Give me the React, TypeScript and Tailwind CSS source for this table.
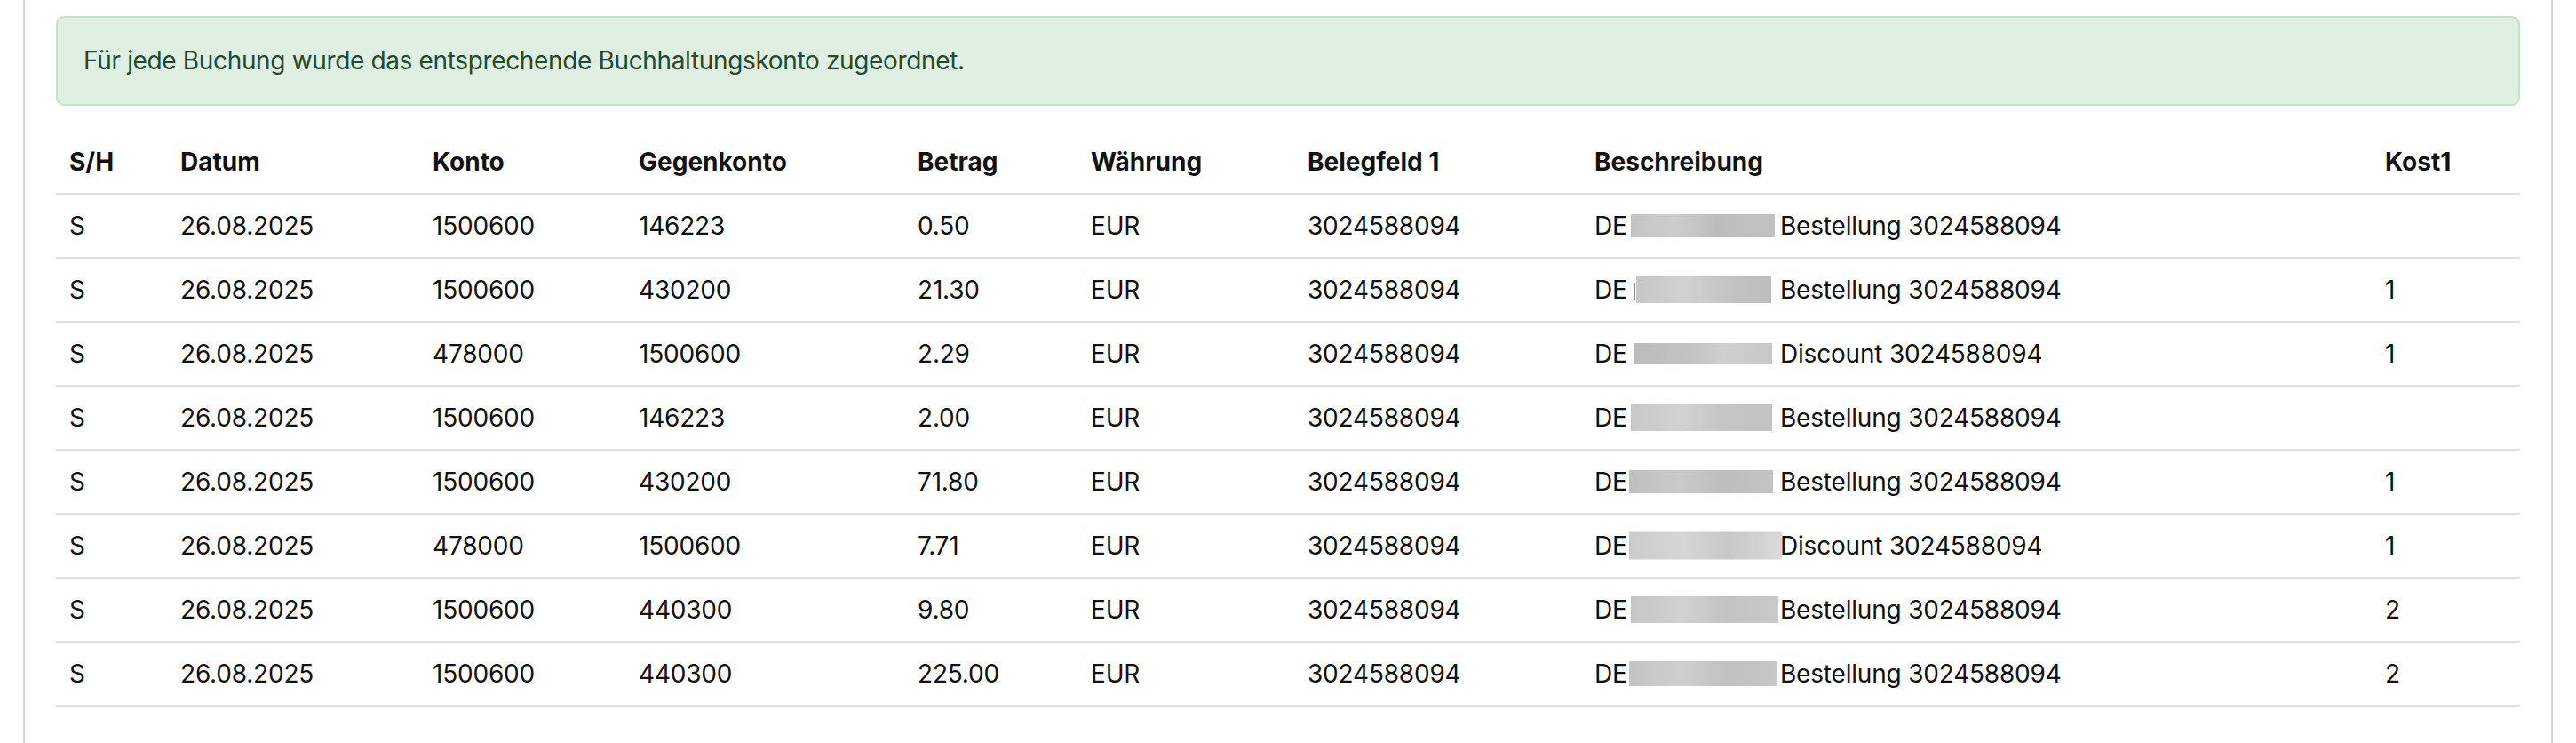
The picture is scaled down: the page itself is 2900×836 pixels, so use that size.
type Booking = {
    sh: string;
    datum: string;
    konto: string;
    gegenkonto: string;
    betrag: string;
    waehrung: string;
    beleg: string;
    text: string;
    kost: string;
    // redaction box over the hidden part of the description
    box: string;
    stub?: boolean;
};

const rows: Booking[] = [
    { sh: "S", datum: "26.08.2025", konto: "1500600", gegenkonto: "146223", betrag: "0.50", waehrung: "EUR", beleg: "3024588094", text: "Bestellung 3024588094", kost: "", box: "left-[41px] w-[162px] h-[26px] bg-[linear-gradient(90deg,#c4c4c4,#cdcdcd_30%,#bdbdbd_60%,#c2c2c2)]" },
    { sh: "S", datum: "26.08.2025", konto: "1500600", gegenkonto: "430200", betrag: "21.30", waehrung: "EUR", beleg: "3024588094", text: "Bestellung 3024588094", kost: "1", box: "left-[47px] w-[152px] h-[30px] bg-[linear-gradient(90deg,#c6c6c6,#d1d1d1_35%,#c3c3c3_70%,#bdbdbd)]", stub: true },
    { sh: "S", datum: "26.08.2025", konto: "478000", gegenkonto: "1500600", betrag: "2.29", waehrung: "EUR", beleg: "3024588094", text: "Discount 3024588094", kost: "1", box: "left-[45px] w-[155px] h-[24px] bg-[linear-gradient(90deg,#bcbcbc,#c2c2c2_40%,#cfcfcf_65%,#c7c7c7)]" },
    { sh: "S", datum: "26.08.2025", konto: "1500600", gegenkonto: "146223", betrag: "2.00", waehrung: "EUR", beleg: "3024588094", text: "Bestellung 3024588094", kost: "", box: "left-[41px] w-[159px] h-[30px] bg-[linear-gradient(90deg,#c8c8c8,#d2d2d2_35%,#c5c5c5_65%,#c3c3c3)]" },
    { sh: "S", datum: "26.08.2025", konto: "1500600", gegenkonto: "430200", betrag: "71.80", waehrung: "EUR", beleg: "3024588094", text: "Bestellung 3024588094", kost: "1", box: "left-[39px] w-[162px] h-[26px] bg-[linear-gradient(90deg,#c0c0c0,#cacaca_35%,#bdbdbd_65%,#c4c4c4)]" },
    { sh: "S", datum: "26.08.2025", konto: "478000", gegenkonto: "1500600", betrag: "7.71", waehrung: "EUR", beleg: "3024588094", text: "Discount 3024588094", kost: "1", box: "left-[39px] w-[172px] h-[31px] bg-[linear-gradient(90deg,#cbcbcb,#d6d6d6_35%,#c8c8c8_65%,#dadada)]" },
    { sh: "S", datum: "26.08.2025", konto: "1500600", gegenkonto: "440300", betrag: "9.80", waehrung: "EUR", beleg: "3024588094", text: "Bestellung 3024588094", kost: "2", box: "left-[41px] w-[166px] h-[30px] bg-[linear-gradient(90deg,#c6c6c6,#d1d1d1_35%,#c3c3c3_65%,#c9c9c9)]" },
    { sh: "S", datum: "26.08.2025", konto: "1500600", gegenkonto: "440300", betrag: "225.00", waehrung: "EUR", beleg: "3024588094", text: "Bestellung 3024588094", kost: "2", box: "left-[39px] w-[166px] h-[28px] bg-[linear-gradient(90deg,#c3c3c3,#cfcfcf_35%,#c1c1c1_65%,#c6c6c6)]" },
];

const headers = ["S/H", "Datum", "Konto", "Gegenkonto", "Betrag", "Währung", "Belegfeld 1", "Beschreibung", "Kost1"];

const cell = "border-b-2 border-[#dee2e6] px-[15px] py-[14px] text-left align-middle whitespace-nowrap";

export default function App() {
    return (
        <div className="min-h-[836px] bg-white font-['Inter','Liberation_Sans',sans-serif] text-[28px] leading-[42px] text-[#111]">
            <div className="ml-[26px] w-[2848px] min-h-[836px] border-x-2 border-[#d5d5d5] px-[35px] pt-[18px]">
                <div className="rounded-[9px] border-2 border-[#c3e4cb] bg-[#dff0e3] px-[29px] py-[27px] leading-[43px] tracking-[-0.35px] text-[#25492f]">
                    Für jede Buchung wurde das entsprechende Buchhaltungskonto zugeordnet.
                </div>

                <table className="mt-[28px] w-full table-fixed border-collapse tracking-[-0.2px]">
                    <colgroup>
                        <col className="w-[125px]" />
                        <col className="w-[284px]" />
                        <col className="w-[232px]" />
                        <col className="w-[314px]" />
                        <col className="w-[195px]" />
                        <col className="w-[244px]" />
                        <col className="w-[323px]" />
                        <col className="w-[890px]" />
                        <col className="w-[167px]" />
                    </colgroup>
                    <thead>
                        <tr>
                            {headers.map((h) => (
                                <th key={h} className={`${cell} font-bold tracking-normal`}>{h}</th>
                            ))}
                        </tr>
                    </thead>
                    <tbody>
                        {rows.map((r, i) => (
                            <tr key={i}>
                                <td className={cell}>{r.sh}</td>
                                <td className={cell}>{r.datum}</td>
                                <td className={cell}>{r.konto}</td>
                                <td className={cell}>{r.gegenkonto}</td>
                                <td className={cell}>{r.betrag}</td>
                                <td className={cell}>{r.waehrung}</td>
                                <td className={cell}>{r.beleg}</td>
                                <td className={cell}>
                                    <div className="flex items-center">
                                        <span className="relative flex h-[42px] w-[209px] shrink-0 items-center">
                                            DE
                                            {r.stub && <span className="absolute left-[44px] top-[13px] h-[19px] w-[2px] bg-[#8a8a8a]" />}
                                            <span className={`absolute top-1/2 -translate-y-1/2 ${r.box}`} />
                                        </span>
                                        <span>{r.text}</span>
                                    </div>
                                </td>
                                <td className={cell}>{r.kost}</td>
                            </tr>
                        ))}
                    </tbody>
                </table>
            </div>
        </div>
    );
}
